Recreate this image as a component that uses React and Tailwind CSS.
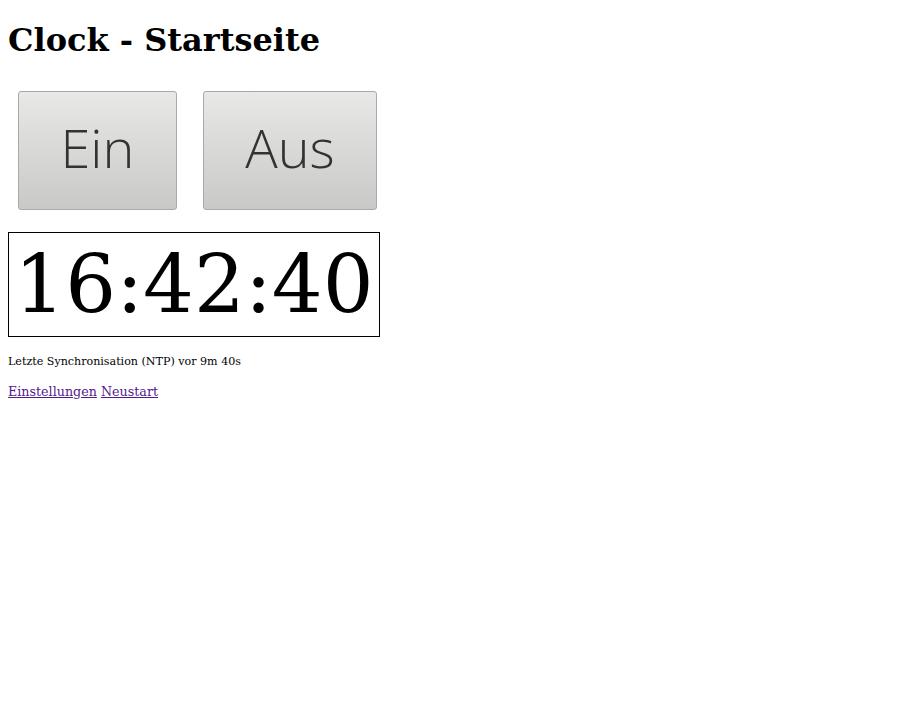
export default function App() {
  const btn =
    "rounded-[3px] border border-[#a9a9a9] bg-gradient-to-b from-[#e8e8e7] to-[#c9c9c7] text-[#333] text-[54px] font-light font-['Open_Sans',sans-serif] h-[119px] pb-[6px] flex items-center justify-center";
  return (
    <div className="m-2 text-black font-['DejaVu_Serif',serif]">
      <h1 className="text-[32px] font-bold leading-[37px] mt-[22px] mb-[32px]">
        Clock - Startseite
      </h1>
      <div className="flex items-start ml-[10px] gap-[26px]">
        <button className={`${btn} w-[159px]`}>Ein</button>
        <button className={`${btn} w-[174px]`}>Aus</button>
      </div>
      <div className="mt-[22px] w-[372px] h-[105px] border border-black px-[5px] flex items-center justify-center text-[80px] leading-none">
        16:42:40
      </div>
      <p className="mt-[18px] text-[11.1px] leading-[13px]">
        Letzte Synchronisation (NTP) vor 9m 40s
      </p>
      <p className="mt-[16px] text-[12.7px] leading-[15px]">
        <a href="#" className="underline text-[#551a8b]">Einstellungen</a>{" "}
        <a href="#" className="underline text-[#551a8b]">Neustart</a>
      </p>
    </div>
  );
}
